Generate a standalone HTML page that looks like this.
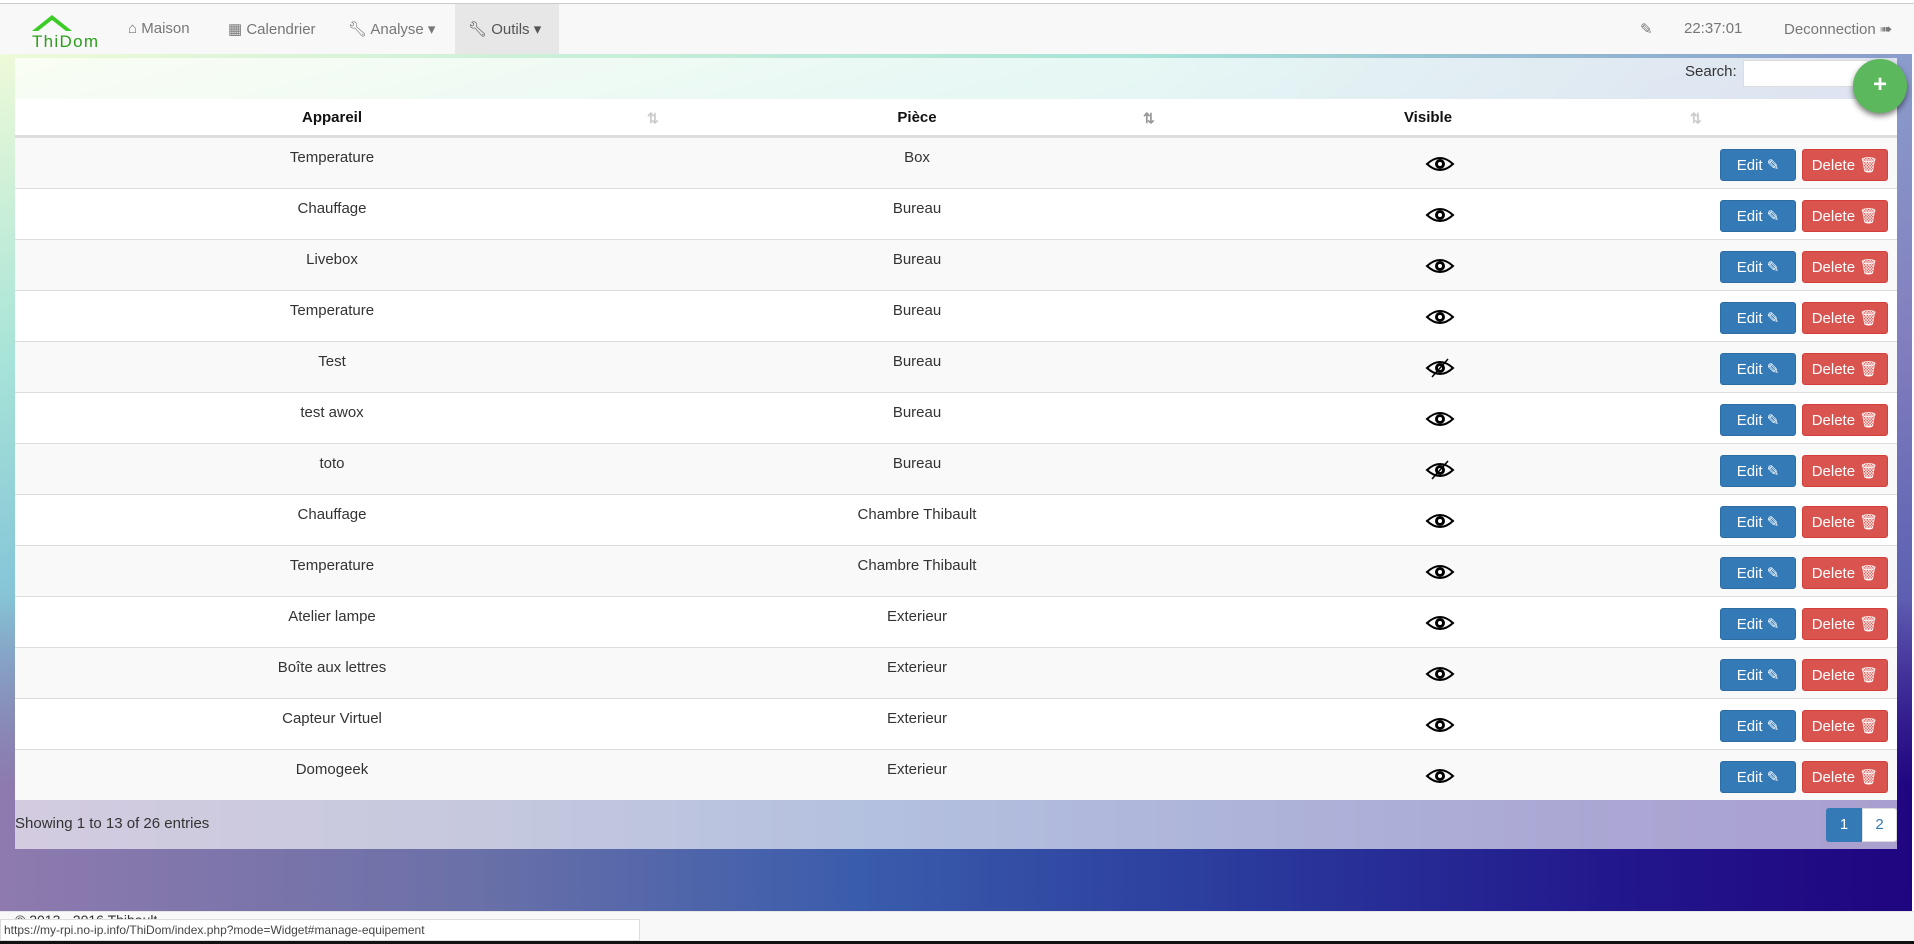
<!DOCTYPE html>
<html><head><meta charset="utf-8"><style>
*{margin:0;padding:0;box-sizing:border-box}
body{width:1914px;height:944px;overflow:hidden;position:relative;background:#fff;font-family:"Liberation Sans",sans-serif;color:#333;font-size:15px}
.bg{position:absolute;left:0;top:54px;width:1912px;height:857px;background:
linear-gradient(165deg,#eefad8 0%,#a8e4d8 22%,#88c8d8 38%,#7890c0 58%,#3458a8 75%,#231a90 88%,#1e0680 100%);}
.bg2{position:absolute;left:0;top:54px;width:1912px;height:857px;background:linear-gradient(90deg,rgba(150,120,180,0.0) 0%,rgba(150,120,180,0.0) 60%,rgba(140,110,190,0.5) 100%)}
.bg3{position:absolute;left:0;top:600px;width:1912px;height:311px;background:linear-gradient(90deg,#8e7aae 0%,#6a70a8 25%,#3a5cac 45%,#2a3a9c 65%,#22168c 85%,#200580 100%);-webkit-mask-image:linear-gradient(180deg,transparent 0%,#000 60%);mask-image:linear-gradient(180deg,transparent 0%,#000 60%)}
.nav{position:absolute;left:0;top:3px;width:1914px;height:51px;background:#f8f8f8;border-top:1px solid #ccc}
.nav span{position:absolute;top:16px;color:#777;font-size:15px}
.panelTop{position:absolute;left:15px;top:58px;width:1882px;height:41px;background:rgba(255,255,255,0.72)}
.panelBot{position:absolute;left:15px;top:800px;width:1882px;height:49px;background:rgba(255,255,255,0.62)}
.head{position:absolute;left:15px;top:99px;width:1882px;height:39px;background:#fff;border-bottom:3px solid #ddd;font-weight:bold;color:#111}
.row{position:absolute;left:15px;width:1882px;height:51px;border-top:1px solid #ddd}
.c{position:absolute;transform:translateX(-50%);white-space:nowrap}
.btn{position:absolute;top:11px;height:32px;border-radius:3px;color:#fff;font-size:15px;line-height:31px;text-align:center}
.e{left:1705px;width:76px;background:#337ab7;border:1px solid #2e6da4}
.d{left:1787px;width:86px;background:#d9534f;border:1px solid #d43f3a}
.sort{position:absolute;top:11px;color:#ccc;font-size:14px}
</style></head><body>
<div class="bg"></div><div class="bg2"></div><div class="bg3"></div>
<div class="nav">
<svg style="position:absolute;left:28px;top:5px" width="76" height="42"><path d="M4 22 L24 6 L44 22 L38 22 L24 11 L10 22Z" fill="#3ccc28"/><text x="4" y="38" font-family="Liberation Sans" font-size="17" fill="#2aa01a" textLength="66">ThiDom</text></svg>
<span style="left:128px">&#8962; Maison</span>
<span style="left:228px">&#9638; Calendrier</span>
<span style="left:348px">&#128295;&#xFE0E; Analyse &#9662;</span>
<div style="position:absolute;left:455px;top:0;width:104px;height:50px;background:#e7e7e7"></div>
<span style="left:468px;color:#555">&#128295;&#xFE0E; Outils &#9662;</span>
<span style="left:1640px">&#9998;</span>
<span style="left:1684px">22:37:01</span>
<span style="left:1784px">Deconnection &#10144;</span>
</div>
<div class="panelTop"></div>
<div style="position:absolute;left:1685px;top:63px;font-size:15px;color:#333">Search:</div>
<div style="position:absolute;left:1743px;top:60px;width:125px;height:27px;background:#fff;border:1px solid #ddd"></div>
<div class="head">
<span class="c" style="left:317px;top:10px">Appareil</span><span class="sort" style="left:632px">&#8645;</span>
<span class="c" style="left:902px;top:10px">Pièce</span><span class="sort" style="left:1128px;color:#999">&#8645;</span>
<span class="c" style="left:1413px;top:10px">Visible</span><span class="sort" style="left:1675px">&#8645;</span>
</div>
<div style="position:absolute;left:1853px;top:59px;width:54px;height:54px;border-radius:50%;background:#5cb85c;box-shadow:0 3px 6px rgba(0,0,0,.5);color:#fff;font-size:24px;text-align:center;line-height:52px;font-weight:bold">+</div>
<div id="rows"></div>
<div class="panelBot"></div>
<div style="position:absolute;left:15px;top:815px;font-size:15px;color:#333">Showing 1 to 13 of 26 entries</div>
<div style="position:absolute;left:1826px;top:808px;width:36px;height:34px;background:#337ab7;border-radius:3px 0 0 3px;color:#fff;text-align:center;line-height:34px">1</div>
<div style="position:absolute;left:1862px;top:808px;width:35px;height:34px;background:#fff;border:1px solid #ddd;border-radius:0 3px 3px 0;color:#337ab7;text-align:center;line-height:32px">2</div>
<div style="position:absolute;left:0;top:911px;width:1914px;height:30px;background:#f8f8f8;border-top:1px solid #e7e7e7"></div>
<div style="position:absolute;left:15px;top:912px;font-size:14px;color:#333;height:8px;overflow:hidden">© 2013 - 2016 Thibault</div>
<div style="position:absolute;left:0;top:919px;width:640px;height:22px;background:#fff;border:1px solid #ddd;font-size:12px;color:#444;padding:3px 3px;line-height:15px">https://my-rpi.no-ip.info/ThiDom/index.php?mode=Widget#manage-equipement</div>
<div style="position:absolute;left:0;top:941px;width:1914px;height:3px;background:#111"></div>
<script>
var d=[["Temperature","Box",1],["Chauffage","Bureau",1],["Livebox","Bureau",1],["Temperature","Bureau",1],["Test","Bureau",0],["test awox","Bureau",1],["toto","Bureau",0],["Chauffage","Chambre Thibault",1],["Temperature","Chambre Thibault",1],["Atelier lampe","Exterieur",1],["Boîte aux lettres","Exterieur",1],["Capteur Virtuel","Exterieur",1],["Domogeek","Exterieur",1]];
var h="";
d.forEach(function(r,i){
var eye='<svg class="c" style="left:1425px;top:16px" width="30" height="20" viewBox="0 0 30 20"><path d="M2 10 Q15 -2 28 10 Q15 22 2 10Z" fill="none" stroke="#000" stroke-width="2"/><circle cx="15" cy="10" r="5" fill="#000"/><circle cx="15" cy="10" r="2" fill="#fff"/>'+(r[2]?'':'<line x1="7" y1="19" x2="23" y2="1" stroke="#000" stroke-width="1.5"/>')+'</svg>';
h+='<div class="row" style="top:'+(137+i*51)+'px;background:'+(i%2?'#fff':'#f9f9f9')+'"><span class="c" style="left:317px;top:11px">'+r[0]+'</span><span class="c" style="left:902px;top:11px">'+r[1]+'</span>'+eye+'<div class="btn e">Edit &#9998;</div><div class="btn d">Delete &#128465;&#xFE0E;</div></div>';
});
document.getElementById("rows").innerHTML=h;
</script>
</body></html>
